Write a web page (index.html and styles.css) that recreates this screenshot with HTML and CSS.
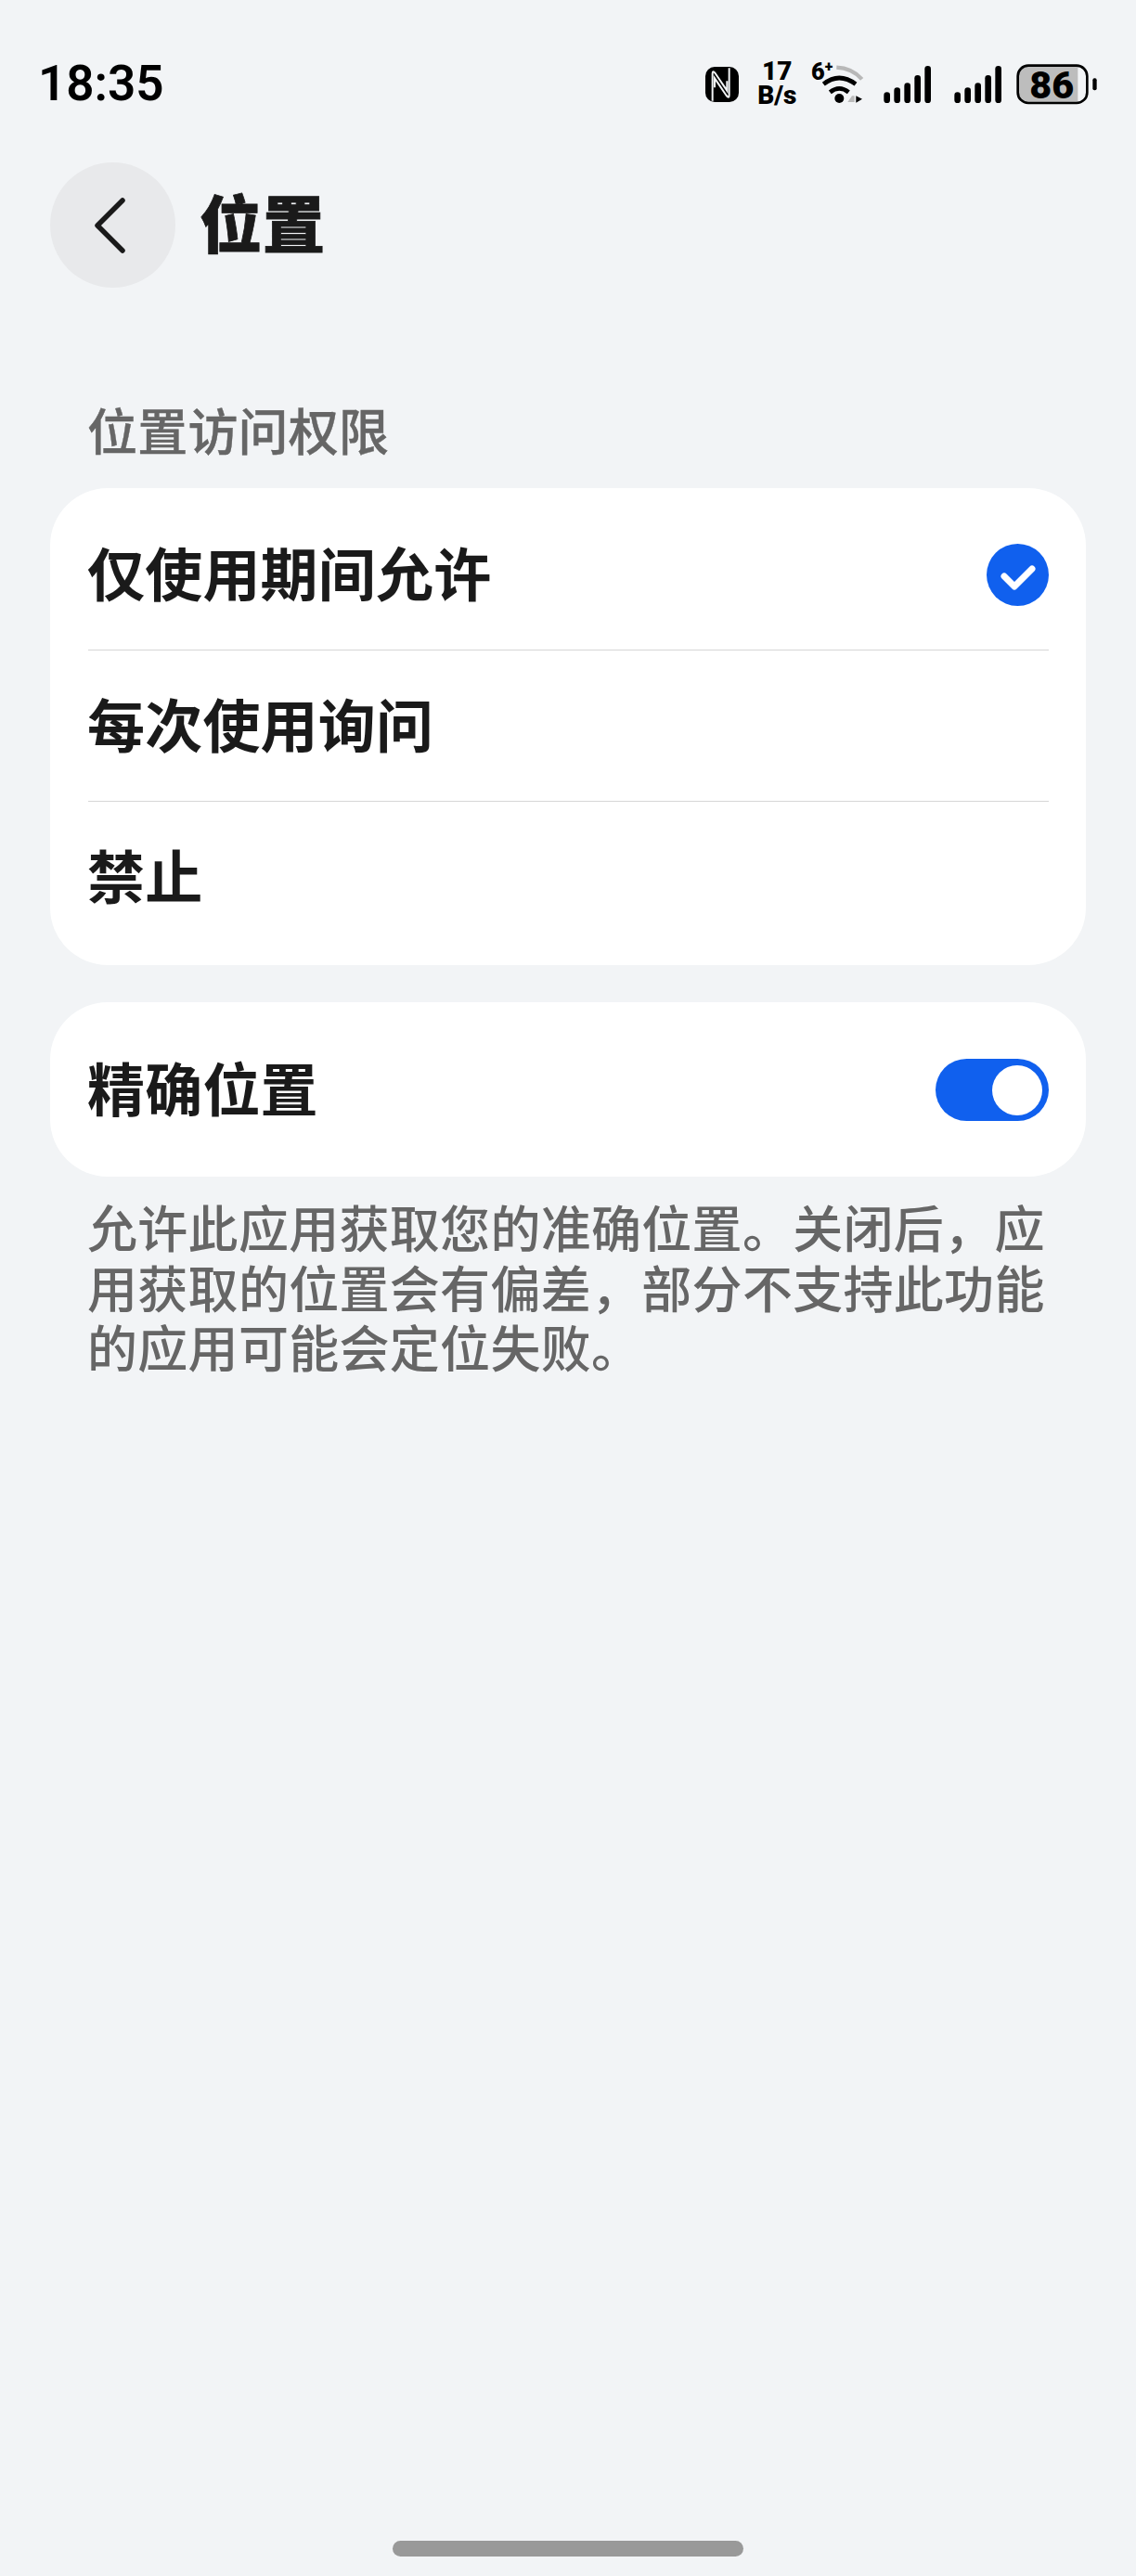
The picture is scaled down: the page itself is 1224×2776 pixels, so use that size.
FILE: index.html
```html
<!DOCTYPE html>
<html lang="zh-CN">
<head>
<meta charset="utf-8">
<title>位置</title>
<link rel="stylesheet" href="styles.css">
</head>
<body>
<div class="page">
  <div class="status-bar">
    <span class="time">18:35</span>
    <svg class="status-icons" viewBox="0 0 1500 240" width="500" height="80">
      <rect x="108" y="66" width="108" height="114" rx="30" fill="#000"/>
      <path d="M131 176V88q0-12 9-1l38 56V112M185 70V158q0 12-9 1l-38-56v30" fill="none" stroke="#f2f4f6" stroke-width="6"/>
      <text class="st-speed" x="340" y="109" text-anchor="middle">17</text>
      <text class="st-speed" x="340" y="185" text-anchor="middle">B/s</text>
      <text class="st-six" x="450" y="109">6<tspan class="st-plus" dy="-27">+</tspan></text>
      <path d="M532 68q50 2 82 38" fill="none" stroke="#b8b8b8" stroke-width="13"/>
      <path d="M490 122q50-40 104 0" fill="none" stroke="#000" stroke-width="14"/>
      <path d="M511 148q30-24 60 0" fill="none" stroke="#000" stroke-width="14"/>
      <circle cx="541" cy="168" r="15" fill="#000"/>
      <path d="M568 180l14-20h8v20z" fill="#bbb"/>
      <path d="M595 160l20 10-20 12z" fill="#000"/>
      <g fill="#000">
        <rect x="685" y="148" width="20" height="35" rx="10"/>
        <rect x="718" y="133" width="20" height="50" rx="10"/>
        <rect x="751" y="118" width="20" height="65" rx="10"/>
        <rect x="784" y="93" width="20" height="90" rx="10"/>
        <rect x="817" y="63" width="20" height="120" rx="10"/>
        <rect x="913" y="148" width="20" height="35" rx="10"/>
        <rect x="946" y="133" width="20" height="50" rx="10"/>
        <rect x="979" y="118" width="20" height="65" rx="10"/>
        <rect x="1012" y="93" width="20" height="90" rx="10"/>
        <rect x="1045" y="63" width="20" height="120" rx="10"/>
      </g>
      <path d="M1150 64H1312V181H1150a32 32 0 0 1-32-32V96a32 32 0 0 1 32-32z" fill="#bdbdbd"/>
      <rect x="1118" y="62" width="224" height="121" rx="34" fill="none" stroke="#000" stroke-width="8"/>
      <text class="st-batt" x="1228" y="168" text-anchor="middle">86</text>
      <rect x="1360" y="103" width="13" height="39" rx="6" fill="#000"/>
    </svg>
  </div>

  <header class="app-bar">
    <button class="back" type="button" aria-label="返回">
      <svg viewBox="0 0 36 64" width="36" height="64"><path d="M31 5 4 32l27 27" fill="none" stroke="#1a1a1a" stroke-width="5.5" stroke-linecap="round" stroke-linejoin="round"/></svg>
    </button>
    <h1 class="title">位置</h1>
  </header>

  <main class="content">
    <h2 class="section-label">位置访问权限</h2>
    <section class="card card-list">
      <div class="row">
        <span class="row-text">仅使用期间允许</span>
        <svg class="check" viewBox="0 0 67 67" width="67" height="67"><circle cx="33.5" cy="33.5" r="33.5" fill="#1060ee"/><path d="M19 35l11 11 19-19" fill="none" stroke="#fff" stroke-width="7" stroke-linecap="round" stroke-linejoin="round"/></svg>
      </div>
      <div class="row">
        <span class="row-text">每次使用询问</span>
      </div>
      <div class="row">
        <span class="row-text">禁止</span>
      </div>
    </section>

    <section class="card card-single">
      <span class="row-text">精确位置</span>
      <span class="toggle"><span class="knob"></span></span>
    </section>

    <p class="note">允许此应用获取您的准确位置。关闭后，应用获取的位置会有偏差，部分不支持此功能的应用可能会定位失败。</p>
  </main>

  <div class="home-indicator"></div>
</div>
</body>
</html>
```

FILE: styles.css
```css
* { box-sizing: border-box; }
html, body { margin: 0; padding: 0; }
body {
  background: #f2f4f6;
  font-family: "Noto Sans CJK SC", "Noto Sans", sans-serif;
  color: #1a1a1a;
}
.page {
  height: 2776px;
  display: flex;
  flex-direction: column;
}
.status-bar {
  height: 130px;
  padding: 50px 0 0 41px;
  display: flex;
  justify-content: space-between;
  align-items: flex-start;
}
.time {
  font-family: Roboto, sans-serif;
  font-weight: 600;
  font-size: 53px;
  line-height: 76px;
  margin-top: 2px;
  color: #000;
}
.status-icons { flex: none; }
.st-speed { font-family: Roboto, sans-serif; font-weight: 900; font-size: 84px; fill: #000; }
.st-six { font-family: Roboto, sans-serif; font-weight: 900; font-size: 76px; fill: #000; }
.st-plus { font-weight: 900; font-size: 48px; }
.st-batt { font-family: Roboto, sans-serif; font-weight: 900; font-size: 124px; fill: #000; }
.app-bar {
  margin-top: 45px;
  padding-left: 54px;
  display: flex;
  align-items: center;
  gap: 26px;
}
.back {
  width: 135px;
  height: 135px;
  border: 0;
  padding: 0 6px 0 0;
  border-radius: 50%;
  background: #e8e9eb;
  display: flex;
  align-items: center;
  justify-content: center;
}
.title {
  margin: 0;
  padding-bottom: 9px;
  font-size: 67px;
  line-height: 80px;
  font-weight: 900;
  letter-spacing: 1px;
  color: #1a1a1a;
  -webkit-text-stroke: 0.8px #1a1a1a;
}
.content {
  padding: 121px 54px 0;
  display: flex;
  flex-direction: column;
}
.section-label {
  margin: 0 0 31px 40px;
  font-size: 54px;
  letter-spacing: 0.2px;
  line-height: 64px;
  font-weight: 500;
  color: #666;
  -webkit-text-stroke: 0.4px #666;
}
.card {
  background: #fff;
  border-radius: 62px;
  padding-left: 41px;
  padding-right: 40px;
}
.card-list { padding-top: 12px; padding-bottom: 13px; }
.row {
  height: 163px;
  display: flex;
  align-items: center;
  justify-content: space-between;
  border-bottom: 1.5px solid #d6d6d6;
}
.row:last-child { border-bottom: 0; }
.row-text {
  margin-left: -1px;
  padding-bottom: 7px;
  font-size: 62px;
  letter-spacing: 0.2px;
  line-height: 80px;
  font-weight: 700;
  color: #1a1a1a;
}
.card-single {
  margin-top: 40px;
  height: 188px;
  display: flex;
  align-items: center;
  justify-content: space-between;
}
.toggle {
  width: 122px;
  height: 67px;
  border-radius: 34px;
  background: #1060ee;
  padding: 7px;
  display: flex;
  justify-content: flex-end;
}
.knob {
  width: 54px;
  height: 54px;
  border-radius: 50%;
  background: #fff;
}
.note {
  margin: 22px 30px 0 40px;
  font-size: 54px;
  letter-spacing: 0.3px;
  line-height: 64.5px;
  font-weight: 500;
  color: #666;
}
.home-indicator {
  margin: auto auto 21px;
  width: 378px;
  height: 17px;
  border-radius: 9px;
  background: #999;
}
```
